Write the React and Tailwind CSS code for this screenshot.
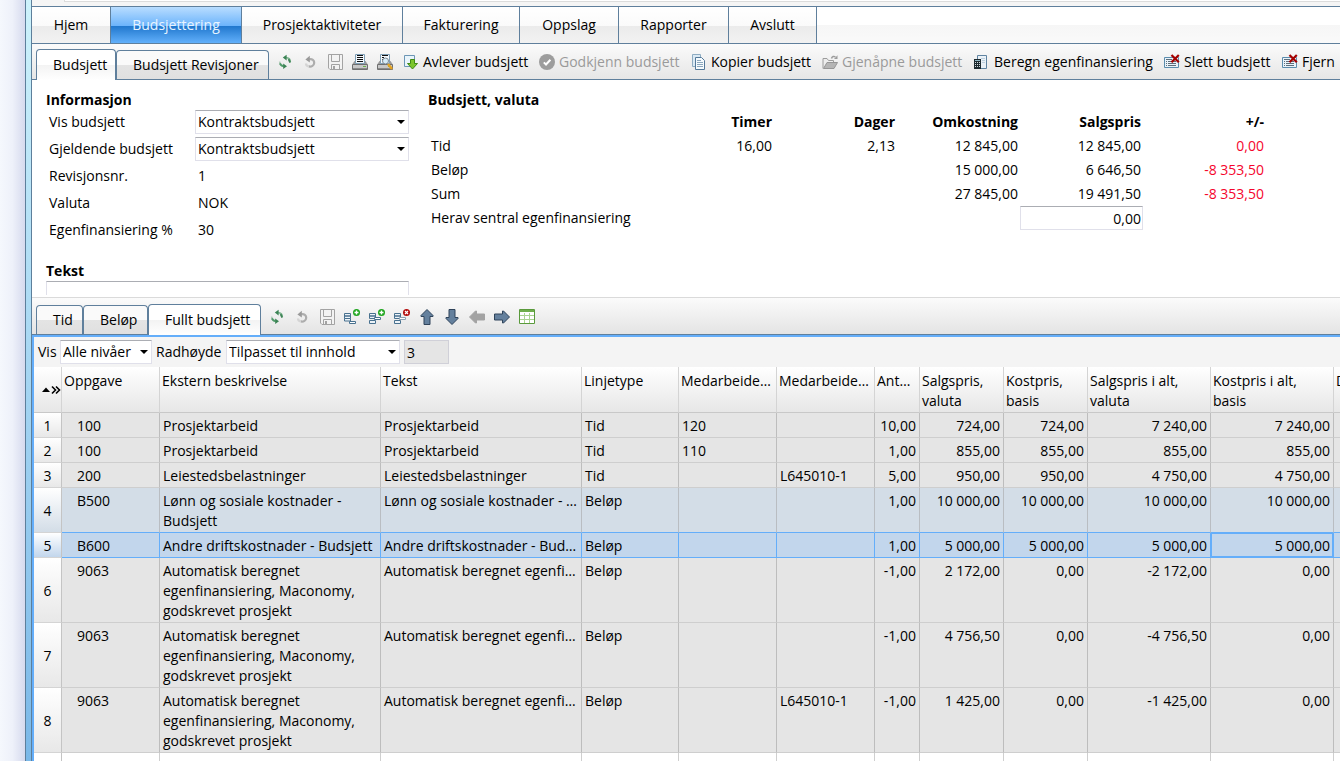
import React, { useState } from 'react';
import clsx from 'clsx';

const menuItems = [
  { label: 'Hjem', width: 'w-[79px]' },
  { label: 'Budsjettering', width: 'w-[131px]' },
  { label: 'Prosjektaktiviteter', width: 'w-[161px]' },
  { label: 'Fakturering', width: 'w-[117px]' },
  { label: 'Oppslag', width: 'w-[99px]' },
  { label: 'Rapporter', width: 'w-[110px]' },
  { label: 'Avslutt', width: 'w-[88px]' },
];

const totals = [
  { label: 'Tid', values: ['16,00', '2,13', '12 845,00', '12 845,00', '0,00'] },
  { label: 'Beløp', values: ['', '', '15 000,00', '6 646,50', '-8 353,50'] },
  { label: 'Sum', values: ['', '', '27 845,00', '19 491,50', '-8 353,50'] },
];

const columns = [
  { label: 'Oppgave', width: 'w-[98px]' },
  { label: 'Ekstern beskrivelse', width: 'w-[221px]' },
  { label: 'Tekst', width: 'w-[201px]' },
  { label: 'Linjetype', width: 'w-[97px]' },
  { label: 'Medarbeidernr.', width: 'w-[98px]', truncate: true },
  { label: 'Medarbeiderkategori', width: 'w-[98px]', truncate: true },
  { label: 'Antall timer', width: 'w-[45px]', truncate: true },
  { label: 'Salgspris, valuta', width: 'w-[84px]' },
  { label: 'Kostpris, basis', width: 'w-[84px]' },
  { label: 'Salgspris i alt, valuta', width: 'w-[123px]' },
  { label: 'Kostpris i alt, basis', width: 'w-[123px]' },
  { label: 'D', width: 'w-[80px]' },
];

const auto = 'Automatisk beregnet egenfinansiering, Maconomy, godskrevet prosjekt';

const rows = [
  { task: '100', desc: 'Prosjektarbeid', type: 'Tid', emp: '120', cat: '', nums: ['10,00', '724,00', '724,00', '7 240,00', '7 240,00'] },
  { task: '100', desc: 'Prosjektarbeid', type: 'Tid', emp: '110', cat: '', nums: ['1,00', '855,00', '855,00', '855,00', '855,00'] },
  { task: '200', desc: 'Leiestedsbelastninger', type: 'Tid', emp: '', cat: 'L645010-1', nums: ['5,00', '950,00', '950,00', '4 750,00', '4 750,00'] },
  { task: 'B500', desc: 'Lønn og sosiale kostnader - Budsjett', type: 'Beløp', emp: '', cat: '', nums: ['1,00', '10 000,00', '10 000,00', '10 000,00', '10 000,00'], state: 'hover' },
  { task: 'B600', desc: 'Andre driftskostnader - Budsjett', type: 'Beløp', emp: '', cat: '', nums: ['1,00', '5 000,00', '5 000,00', '5 000,00', '5 000,00'], state: 'selected' },
  { task: '9063', desc: auto, type: 'Beløp', emp: '', cat: '', nums: ['-1,00', '2 172,00', '0,00', '-2 172,00', '0,00'] },
  { task: '9063', desc: auto, type: 'Beløp', emp: '', cat: '', nums: ['-1,00', '4 756,50', '0,00', '-4 756,50', '0,00'] },
  { task: '9063', desc: auto, type: 'Beløp', emp: '', cat: 'L645010-1', nums: ['-1,00', '1 425,00', '0,00', '-1 425,00', '0,00'] },
];

/* ---------- Icons ---------- */

const Svg = ({ children }) => (
  <svg width="16" height="16" viewBox="0 0 16 16" className="shrink-0" fill="none" aria-hidden="true">
    {children}
  </svg>
);

const RefreshIcon = () => (
  <Svg>
    <path d="M9 3.6C11.9 3.6 13.4 5.6 13.2 8" stroke="#7fb591" strokeWidth="1.8" />
    <path d="M11.6 5.2L13.2 8.6" stroke="#3f8457" strokeWidth="1.8" />
    <path d="M9.6 0.8L5.8 3.6L9.6 6.4Z" fill="#3a8354" />
    <path d="M7 12.4C4.2 12.2 2.6 10.2 2.8 7.6" stroke="#b5cdbd" strokeWidth="1.8" />
    <path d="M3 9.4C3.6 11.2 4.8 12 6.6 12.2" stroke="#4f9a69" strokeWidth="1.8" />
    <path d="M6.2 9.4L10 12.2L6.2 15Z" fill="#3a8354" />
  </Svg>
);

const UndoIcon = () => (
  <Svg>
    <path d="M7 5.3C10.2 4.6 12.4 6.4 12.2 9C12 11.4 9.6 13 6.8 12.4" stroke="#adadad" strokeWidth="2.2" />
    <path d="M6.8 12.4C5 12 4 10.6 4 9.4" stroke="#d4d4d4" strokeWidth="2.2" />
    <path d="M7.8 1.8V8.6L3.4 5.4Z" fill="#9a9a9a" />
  </Svg>
);

const SaveIcon = () => (
  <Svg>
    <path d="M1.5 0.5H15.5V15.5H3L1.5 14Z" fill="#f3f3f3" stroke="#a3a3a3" />
    <path d="M4.5 0.5V7.5H12.5V0.5M4.5 15.5V10.5H12.5V15.5" stroke="#a3a3a3" />
    <path d="M6 12H8V15H6Z" fill="#a3a3a3" />
  </Svg>
);

const PrinterBase = () => (
  <>
    <path d="M0.5 10L2.5 7H13.5L15.5 10Z" fill="#9a9a9a" />
    <path d="M3.5 0.5H12.5V9.5H3.5Z" fill="#f4f9fd" stroke="#7f9fb6" />
    <path d="M0.5 10.5H15.5V15.5H0.5Z" fill="#c8c8c8" stroke="#6f6f6f" />
    <path d="M1 14.5H15" stroke="#8b8b8b" />
    <path d="M11 12.5H14" stroke="#69b04b" />
  </>
);

const PrintIcon = () => (
  <Svg>
    <PrinterBase />
    <path d="M5 1.5H11M5 3.5H11M5 5.5H11M5 7.5H11" stroke="#111" />
  </Svg>
);

const PreviewIcon = () => (
  <Svg>
    <PrinterBase />
    <path d="M5 1.5H11M5 3.5H7M5 5.5H6" stroke="#111" />
    <circle cx="8.5" cy="7" r="3" fill="#d5ecf9" stroke="#7d8790" />
    <path d="M11 10L15 15" stroke="#e5a321" strokeWidth="2.5" />
  </Svg>
);

const DeliverIcon = () => (
  <Svg>
    <path d="M1.5 1.5H11.5V12.5H1.5Z" fill="#e9f4fb" stroke="#6c96b5" />
    <path d="M7.5 5.5H11.5V9.5H14.5L9.5 15L4.5 9.5H7.5Z" fill="#7cc52c" stroke="#418a16" />
  </Svg>
);

const ApproveIcon = () => (
  <Svg>
    <circle cx="8" cy="8" r="8" fill="#9d9d9d" />
    <path d="M4.8 8.4L7 10.5L11.4 5.8" stroke="#fff" strokeWidth="2" />
  </Svg>
);

const CopyIcon = () => (
  <Svg>
    <path d="M1.5 0.5H9.5V12.5H1.5Z" fill="#dceaf4" stroke="#8eacc2" />
    <path d="M4.5 3.5H10.5L13.5 6.5V15.5H4.5Z" fill="#f5fafd" stroke="#54799a" />
    <path d="M6 6.5H10M6 8.5H12M6 10.5H12M6 12.5H12" stroke="#8ba7bd" />
  </Svg>
);

const ReopenIcon = () => (
  <Svg>
    <path d="M1 14.5V4.5H5L6.5 6.5H11.5V8.5" fill="#ededed" stroke="#9c9c9c" />
    <path d="M1.5 14.5L5 8.5H15.5L12 14.5Z" fill="#b5b5b5" stroke="#969696" />
    <path d="M9.5 4.5C10 2.3 12 2 13.5 3" stroke="#9c9c9c" strokeWidth="1.5" />
    <path d="M12 5H15.5V1.2Z" fill="#9c9c9c" />
  </Svg>
);

const CalculatorIcon = () => (
  <Svg>
    <path d="M3.5 1.5H12.5V14.5H3.5Z" fill="#eaf1f7" stroke="#5f83a1" />
    <path d="M7 4.5H11M8 6.5H11M8 8.5H11" stroke="#bed0de" />
    <path d="M0 5H7V15H0Z" fill="#1d2a30" />
    <path d="M1 6.5H6" stroke="#8fb6c4" />
    <path d="M1 8.5H6M1 10.5H6M1 12.5H6" stroke="#cfd8dc" strokeDasharray="1 1" />
  </Svg>
);

const DeleteIcon = () => (
  <Svg>
    <path d="M0.5 3.5H14.5V13.5H0.5Z" fill="#eaf3fa" stroke="#5b8cad" />
    <path d="M2 5.5H8M2 7.5H3M4 7.5H12M2 9.5H3M4 9.5H12M2 11.5H3M4 11.5H12" stroke="#5d6e7b" />
    <path d="M7.5 1L14.8 8.3M14.8 1L7.5 8.3" stroke="#a40000" strokeWidth="2.2" />
  </Svg>
);

const RowsBase = () => (
  <path d="M0.5 4.5H6.5V7H0.5ZM0.5 7H6.5V9.5H0.5Z" fill="#edf3f8" stroke="#48718f" />
);

const AddBadge = () => (
  <>
    <circle cx="12.5" cy="3.5" r="3.5" fill="#1ea51e" />
    <path d="M12.5 1.5V5.5M10.5 3.5H14.5" stroke="#fff" strokeWidth="1.4" />
  </>
);

const AddRowIcon = () => (
  <Svg>
    <RowsBase />
    <path d="M0.5 9.5H6.5V12H0.5Z" fill="#edf3f8" stroke="#48718f" />
    <path d="M5.5 12.5H11.5V14.5H5.5Z" fill="#fff" stroke="#48718f" />
    <AddBadge />
  </Svg>
);

const InsertRowIcon = () => (
  <Svg>
    <RowsBase />
    <path d="M5.5 8.5H11.5V10.5H5.5Z" fill="#fff" stroke="#48718f" />
    <path d="M0.5 11.5H6.5V14.5H0.5Z" fill="#edf3f8" stroke="#48718f" />
    <AddBadge />
  </Svg>
);

const RemoveRowIcon = () => (
  <Svg>
    <RowsBase />
    <path d="M5.5 8.5H11.5V10.5H5.5Z" fill="#fff" stroke="#8ca2b3" />
    <path d="M0.5 11.5H6.5V14.5H0.5Z" fill="#edf3f8" stroke="#48718f" />
    <circle cx="12.5" cy="3.5" r="3.5" fill="#b30d0d" />
    <path d="M11 2L14 5M14 2L11 5" stroke="#fff" strokeWidth="1.2" />
  </Svg>
);

const ArrowIcon = ({ rotate = 0, disabled }) => (
  <Svg>
    <path
      d="M8 0.5L14 6.5V7.5H11V15.5H5V7.5H2V6.5Z"
      transform={`rotate(${rotate} 8 8)`}
      fill={disabled ? '#a3a3a3' : '#64809d'}
      stroke={disabled ? '#a3a3a3' : '#2f435a'}
    />
  </Svg>
);

const SheetIcon = () => (
  <Svg>
    <path d="M0.5 0.5H15.5V14.5H0.5Z" fill="#fff" stroke="#5a9a3c" />
    <path d="M1 2H15" stroke="#6fae4c" strokeWidth="2" />
    <path d="M5.5 4V14M10.5 4V14M1 6.5H15M1 10.5H15" stroke="#a9d391" />
  </Svg>
);

const Caret = () => (
  <svg width="8" height="4" viewBox="0 0 8 4" className="pointer-events-none absolute top-[10px] right-1" aria-hidden="true">
    <path d="M0 0H8L4 4Z" fill="#000" />
  </svg>
);

/* ---------- Small parts ---------- */

const IconButton = ({ title, children }) => (
  <button type="button" aria-label={title} className="flex h-6 w-[25px] shrink-0 items-center justify-center">
    {children}
  </button>
);

const ActionButton = ({ icon, width, disabled, children }) => (
  <button
    type="button"
    disabled={disabled}
    className={clsx('flex h-6 shrink-0 items-center gap-1 whitespace-nowrap', width, disabled ? 'text-[#9a9a9a]' : 'text-black')}
  >
    {icon}
    {children}
  </button>
);

const Tab = ({ active, width, onClick, children }) => (
  <button
    type="button"
    role="tab"
    aria-selected={active}
    onClick={onClick}
    className={clsx(
      'shrink-0 rounded-t border border-b-0 border-[#5f7f9c] pl-4 text-left whitespace-nowrap',
      width,
      active
        ? '-mb-px h-[31px] bg-linear-to-b from-white from-50% via-[#f3f3f3] via-50% to-white'
        : 'h-[29px] bg-linear-to-b from-[#fafafa] from-50% via-[#e4e4e4] via-50% to-[#e0e0e0]'
    )}
  >
    {children}
  </button>
);

const Select = ({ id, width, options }) => (
  <div className={clsx('relative shrink-0', width)}>
    <select
      id={id}
      className="block h-6 w-full appearance-none border border-[#e0e0ea] border-t-[#abadb3] bg-white pl-[2px] text-black outline-none"
    >
      {options.map((option) => (
        <option key={option}>{option}</option>
      ))}
    </select>
    <Caret />
  </div>
);

const BudgetInfo = () => (
  <div className="w-[363px] shrink-0">
    <h2 className="h-[26px] font-bold leading-9">Informasjon</h2>
    <div className="grid grid-cols-[149px_214px] auto-rows-[27px] items-center">
      <label htmlFor="vis-budsjett" className="pl-[3px]">Vis budsjett</label>
      <Select id="vis-budsjett" width="w-full" options={['Kontraktsbudsjett']} />
      <label htmlFor="gjeldende" className="pl-[3px]">Gjeldende budsjett</label>
      <Select id="gjeldende" width="w-full" options={['Kontraktsbudsjett']} />
      <span className="pl-[3px]">Revisjonsnr.</span>
      <span className="pl-[3px]">1</span>
      <span className="pl-[3px]">Valuta</span>
      <span className="pl-[3px]">NOK</span>
      <span className="pl-[3px]">Egenfinansiering %</span>
      <span className="pl-[3px]">30</span>
    </div>
    <label htmlFor="tekst" className="block pt-[18px] font-bold">Tekst</label>
    <textarea
      id="tekst"
      className="block h-[14px] w-full resize-none overflow-hidden border border-b-0 border-[#e0e0ea] border-t-[#abadb3] bg-white outline-none"
    />
  </div>
);

const BudgetTotals = () => (
  <div className="shrink-0">
    <h2 className="h-7 font-bold leading-9">Budsjett, valuta</h2>
    <table className="w-[838px] table-fixed border-separate border-spacing-0">
      <thead>
        <tr className="h-6">
          <td className="w-[223px]"></td>
          {['Timer', 'Dager', 'Omkostning', 'Salgspris', '+/-'].map((head) => (
            <th key={head} scope="col" className="w-[123px] pr-[2px] text-right font-bold">{head}</th>
          ))}
        </tr>
      </thead>
      <tbody>
        {totals.map(({ label, values }) => (
          <tr key={label} className="h-6">
            <th scope="row" className="pl-[3px] text-left font-normal">{label}</th>
            {values.map((value, i) => (
              <td key={i} className={clsx('pr-[2px] text-right', i === 4 && 'text-[#f5052d]')}>{value}</td>
            ))}
          </tr>
        ))}
        <tr className="h-6">
          <th scope="row" colSpan={4} className="pl-[3px] text-left font-normal">
            <label htmlFor="sentral">Herav sentral egenfinansiering</label>
          </th>
          <td>
            <input
              id="sentral"
              defaultValue="0,00"
              className="block h-6 w-full border border-[#e0e0ea] border-t-[#abadb3] bg-white pr-px text-right outline-none"
            />
          </td>
          <td></td>
        </tr>
      </tbody>
    </table>
  </div>
);

const BudgetGrid = () => (
  <table className="w-[1380px] table-fixed border-separate border-spacing-0">
    <thead>
      <tr className="h-[46px] bg-linear-to-b from-white to-[#e6e6e6]">
        <th className="w-7 border-r border-b border-r-[#d4d4d4] border-b-[#c8c8c8]">
          <svg width="19" height="10" viewBox="0 0 19 10" className="ml-2" aria-hidden="true">
            <path d="M0 7H8L4 2.5Z" fill="#000" />
            <path d="M10 1.5L13.5 5L10 8.5M14 1.5L17.5 5L14 8.5" fill="none" stroke="#000" strokeWidth="1.6" />
          </svg>
        </th>
        {columns.map(({ label, width, truncate }) => (
          <th
            key={label}
            scope="col"
            className={clsx('border-r border-b border-r-[#d4d4d4] border-b-[#c8c8c8] pt-1 pl-[2px] text-left align-top font-normal', width, truncate && 'truncate pr-[3px]')}
          >
            {label}
          </th>
        ))}
      </tr>
    </thead>
    <tbody>
      {rows.map((row, i) => {
        const selected = row.state === 'selected';
        const hover = row.state === 'hover';
        const cell = clsx(
          'border-r border-b pt-[3px] pb-px align-top',
          selected && 'border-r-[#64aefa] border-b-[#64aefa] bg-[#c2d6ec]',
          hover && 'border-r-[#b9bdc2] border-b-[#64aefa] bg-[#d3dde7]',
          !row.state && 'border-r-[#bdbdbd] border-b-[#cecece] bg-[#e5e5e5]'
        );
        return (
          <tr key={i}>
            <th
              scope="row"
              className={clsx(
                'border-r border-b border-r-[#c4c4c4] border-b-[#d4d4d4] bg-linear-to-b from-white pt-[3px] pb-px text-center align-middle font-normal',
                selected ? 'to-[#c2d6ec]' : hover ? 'to-[#d3dde7]' : 'to-[#e8e8e8]'
              )}
            >
              {i + 1}
            </th>
            <td className={clsx(cell, 'pl-[15px]')}>{row.task}</td>
            <td className={clsx(cell, 'pl-[3px]', selected && 'whitespace-nowrap')}>{row.desc}</td>
            <td className={clsx(cell, 'truncate pr-[3px] pl-[3px]')}>{row.desc}</td>
            <td className={clsx(cell, 'pl-[3px]')}>{row.type}</td>
            <td className={clsx(cell, 'pl-[3px]')}>{row.emp}</td>
            <td className={clsx(cell, 'pl-[3px]')}>{row.cat}</td>
            {row.nums.map((value, n) => (
              <td
                key={n}
                className={clsx(cell, 'pr-[3px] text-right whitespace-nowrap', selected && n === 4 && 'shadow-[inset_1px_1px_0_#64aefa,inset_-1px_-1px_0_#64aefa]')}
              >
                {value}
              </td>
            ))}
            <td className={cell}></td>
          </tr>
        );
      })}
      <tr className="h-[25px]">
        <th className="border-r border-[#c4c4c4]"></th>
        {columns.map(({ label }) => (
          <td key={label} className="border-r border-[#cfcfcf] bg-white"></td>
        ))}
      </tr>
    </tbody>
  </table>
);

const App = () => {
  const [menu, setMenu] = useState('Budsjettering');
  const [topTab, setTopTab] = useState('budsjett');
  const [lineTab, setLineTab] = useState('fullt');

  return (
    <div className="flex h-screen overflow-hidden bg-white font-['Open_Sans','Noto_Sans',sans-serif] text-sm leading-5 text-black">
      {/* Window frame */}
      <div className="w-[25px] shrink-0 bg-linear-to-r from-[#f5f8fd] via-[#eef1fa] to-[#d6daee]"></div>
      <div className="w-[7px] shrink-0 border-x border-[#5d7f9b] bg-linear-to-b from-[#cdf2fb] via-[#a5d5f2] to-[#7ab8e8]"></div>

      <main className="flex min-w-0 flex-1 flex-col">
        <div className="h-[6px] shrink-0 bg-[#f5f5f5] pl-8">
          <div className="h-[2px] border-b border-l border-[#dcdcdc] bg-white"></div>
        </div>

        {/* Main menu */}
        <nav className="flex h-[38px] shrink-0 border-y border-[#5f7f9c] bg-linear-to-b from-white from-50% via-[#f6f6f6] via-50% to-[#fafafa]">
          {menuItems.map(({ label, width }) => (
            <button
              key={label}
              type="button"
              onClick={() => setMenu(label)}
              className={clsx(
                'shrink-0 border-r border-[#5f7f9c] text-center whitespace-nowrap',
                width,
                menu === label
                  ? 'bg-[linear-gradient(to_bottom,#b9ddff_0%,#6cb4fb_52%,#2077cd_53%,#62b0fb_100%)] text-[#e8f4ff]'
                  : 'bg-[linear-gradient(to_bottom,#ffffff_0%,#fafafa_52%,#ebebeb_53%,#f2f2f2_100%)]'
              )}
            >
              {label}
            </button>
          ))}
        </nav>

        {/* Budget toolbar */}
        <div className="flex h-9 shrink-0 items-end border-b border-[#5f7f9c] bg-linear-to-b from-[#fbfbfb] to-[#e6e6e6] pl-1">
          <Tab active={topTab === 'budsjett'} width="w-20" onClick={() => setTopTab('budsjett')}>Budsjett</Tab>
          <Tab active={topTab === 'revisjoner'} width="w-[153px]" onClick={() => setTopTab('revisjoner')}>Budsjett Revisjoner</Tab>
          <div className="flex h-full items-center pl-[3px]">
            <IconButton title="Oppdater"><RefreshIcon /></IconButton>
            <IconButton title="Angre"><UndoIcon /></IconButton>
            <IconButton title="Lagre"><SaveIcon /></IconButton>
            <IconButton title="Skriv ut"><PrintIcon /></IconButton>
            <IconButton title="Forhåndsvis"><PreviewIcon /></IconButton>
            <div className="flex pl-[6px]">
              <ActionButton icon={<DeliverIcon />} width="w-[136px]">Avlever budsjett</ActionButton>
              <ActionButton icon={<ApproveIcon />} width="w-[152px]" disabled>Godkjenn budsjett</ActionButton>
              <ActionButton icon={<CopyIcon />} width="w-[131px]">Kopier budsjett</ActionButton>
              <ActionButton icon={<ReopenIcon />} width="w-[152px]" disabled>Gjenåpne budsjett</ActionButton>
              <ActionButton icon={<CalculatorIcon />} width="w-[190px]">Beregn egenfinansiering</ActionButton>
              <ActionButton icon={<DeleteIcon />} width="w-[118px]">Slett budsjett</ActionButton>
              <ActionButton icon={<DeleteIcon />} width="w-[60px]">Fjern</ActionButton>
            </div>
          </div>
        </div>

        {/* Budget header */}
        <section className="flex h-[218px] shrink-0 gap-[19px] overflow-hidden border-b border-[#dadada] bg-white px-[14px] pt-[2px]">
          <BudgetInfo />
          <BudgetTotals />
        </section>

        {/* Line toolbar */}
        <div className="flex h-[37px] shrink-0 items-end border-b border-[#5f7f9c] bg-linear-to-b from-[#fbfbfb] to-[#e4e4e4] pl-1">
          <Tab active={lineTab === 'tid'} width="w-[47px]" onClick={() => setLineTab('tid')}>Tid</Tab>
          <Tab active={lineTab === 'belop'} width="w-[65px]" onClick={() => setLineTab('belop')}>Beløp</Tab>
          <Tab active={lineTab === 'fullt'} width="w-[113px]" onClick={() => setLineTab('fullt')}>Fullt budsjett</Tab>
          <div className="flex h-full items-center pt-[2px] pl-[3px]">
            <IconButton title="Oppdater"><RefreshIcon /></IconButton>
            <IconButton title="Angre"><UndoIcon /></IconButton>
            <IconButton title="Lagre"><SaveIcon /></IconButton>
            <IconButton title="Legg til linje"><AddRowIcon /></IconButton>
            <IconButton title="Sett inn linje"><InsertRowIcon /></IconButton>
            <IconButton title="Slett linje"><RemoveRowIcon /></IconButton>
            <IconButton title="Flytt opp"><ArrowIcon /></IconButton>
            <IconButton title="Flytt ned"><ArrowIcon rotate={180} /></IconButton>
            <IconButton title="Rykk ut"><ArrowIcon rotate={270} disabled /></IconButton>
            <IconButton title="Rykk inn"><ArrowIcon rotate={90} /></IconButton>
            <IconButton title="Vis som tabell"><SheetIcon /></IconButton>
          </div>
        </div>

        {/* Lines */}
        <section className="min-h-0 flex-1 overflow-hidden border-t-2 border-l-2 border-[#64aefa]">
          <div className="flex h-[30px] items-center gap-1 bg-[#f4f4f4] pl-1">
            <label htmlFor="niva" className="w-[18px]">Vis</label>
            <Select id="niva" width="w-[92px]" options={['Alle nivåer']} />
            <label htmlFor="radhoyde" className="w-[66px]">Radhøyde</label>
            <Select id="radhoyde" width="w-[174px]" options={['Tilpasset til innhold']} />
            <input
              aria-label="Antall linjer"
              defaultValue="3"
              readOnly
              className="h-6 w-[45px] border border-[#d0d0d8] bg-[#e5e5e5] pl-[2px] outline-none"
            />
          </div>
          <BudgetGrid />
        </section>
      </main>
    </div>
  );
};

export default App;
